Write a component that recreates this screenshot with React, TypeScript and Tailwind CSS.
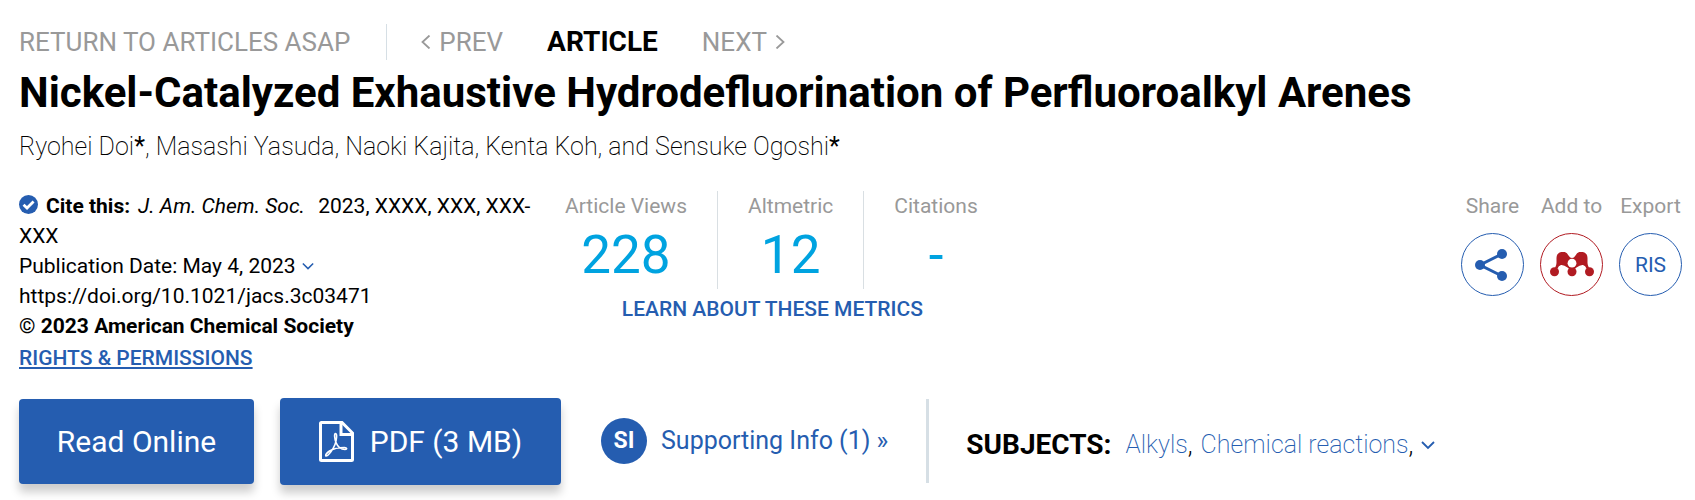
import type { ReactNode } from "react";

const METRICS = [
  { label: "Article Views", value: "228" },
  { label: "Altmetric", value: "12" },
  { label: "Citations", value: "-" },
];

function Chevron({ className, d }: { className: string; d: string }) {
  return (
    <svg
      viewBox="0 0 14 14"
      className={className}
      fill="none"
      stroke="currentColor"
      strokeWidth="1.8"
      aria-hidden
    >
      <path d={d} />
    </svg>
  );
}

const LEFT = "M10.5 0.5 3.500 7l7 6.500";
const RIGHT = "M3.500 0.500 10.500 7l-7 6.500";
const DOWN = "M1 4l6 6 6-6";

function CheckIcon() {
  return (
    <svg viewBox="0 0 18 18" className="mr-2 inline-block size-[19px] align-[-1px]" aria-hidden>
      <circle cx="9" cy="9" r="9" fill="#255db0" />
      <path d="M4.300 9.200l3.300 3.200 6.200-6.200" fill="none" stroke="#fff" strokeWidth="2.600" />
    </svg>
  );
}

function PdfIcon() {
  return (
    <svg viewBox="0 0 35 41" className="h-[41px] w-[35px]" fill="none" stroke="currentColor" aria-hidden>
      <path d="M1.500 2.500q0-1 1-1H23l10.500 10.500V38.500q0 1-1 1h-30q-1 0-1-1z" strokeWidth="3" />
      <path d="M22 1.500V13.500h11.500" strokeWidth="3" />
      <path
        d="M16.500 12.500c-1.500 0-1 5 .5 9 2 5 6 7 9 7 2.500 0 2-2-.5-2-5 0-11 1-15 3.500-3 2-4.500 4.500-3.500 5 2.500 0 7-6.500 9-11.500 1.500-4 2.500-11 .5-11z"
        strokeWidth="1.600"
      />
    </svg>
  );
}

function ShareIcon() {
  return (
    <svg viewBox="0 0 36 32" className="h-8 w-9" fill="currentColor" aria-hidden>
      <path d="M27 5 5 16l22 11" fill="none" stroke="currentColor" strokeWidth="3" />
      <circle cx="27" cy="5" r="5" />
      <circle cx="5" cy="16" r="5" />
      <circle cx="27" cy="27" r="5" />
    </svg>
  );
}

function MendeleyIcon() {
  return (
    <svg viewBox="0 0 44 25" className="h-[25px] w-11" fill="currentColor" aria-hidden>
      <path d="M6.500 6.500A6.300 6.300 0 0 1 18.500 3.500Q20 6 22 6t3.500-2.500A6.300 6.300 0 0 1 37.500 6.500V11q0 2 1.500 5l-2.500.5q-1-3-3.500-3.500-3-.3-6.500 2.500-1.500 1-2.500 2h-4q-1-1-2.500-2Q14 12.700 11 13q-2.500.5-3.500 3.500L5 16q1.500-3 1.500-5z" />
      <circle cx="4.500" cy="19.800" r="4.500" />
      <circle cx="22" cy="19.800" r="4.500" />
      <circle cx="39.500" cy="19.800" r="4.500" />
      <circle cx="22" cy="11.200" r="4.400" fill="#fff" />
    </svg>
  );
}

function Tool({ label, color, children }: { label: string; color: string; children: ReactNode }) {
  return (
    <div className="flex w-[63px] flex-col items-center gap-3">
      <span className="whitespace-nowrap text-[#999]">{label}</span>
      <button
        type="button"
        aria-label={label}
        className={`flex size-[63px] items-center justify-center rounded-full border ${color}`}
      >
        {children}
      </button>
    </div>
  );
}

export default function App() {
  return (
    <main className="bg-white pt-6 pr-[13px] pb-4 pl-[19px] font-['Roboto',sans-serif] text-[21px] leading-[30px] text-black">
      <nav className="flex h-9 items-center text-[26px] text-[#999]">
        <a href="#asap">RETURN TO ARTICLES ASAP</a>
        <span className="mr-8 ml-9 h-full w-px bg-[#d6dfe5]" />
        <a href="#prev" className="flex items-center gap-1.5">
          <Chevron className="size-3.5" d={LEFT} />
          PREV
        </a>
        <span className="mx-11 text-[28px] font-bold text-black">ARTICLE</span>
        <a href="#next" className="flex items-center gap-1.5">
          NEXT
          <Chevron className="size-3.5" d={RIGHT} />
        </a>
      </nav>

      <h1 className="mt-1.5 text-[42px] leading-[54px] font-bold">
        Nickel-Catalyzed Exhaustive Hydrodefluorination of Perfluoroalkyl Arenes
      </h1>

      <p className="mt-[7px] text-[25px] leading-10 font-extralight">
        Ryohei Doi<span className="font-normal">*</span>, Masashi Yasuda, Naoki Kajita, Kenta Koh,
        and Sensuke Ogoshi<span className="font-normal">*</span>
      </p>

      <div className="mt-6 flex items-start">
        <div className="w-[518px] shrink-0">
          <p>
            <CheckIcon />
            <span className="font-bold">Cite this:</span>
            <cite className="mx-2">J. Am. Chem. Soc.</cite>
            &nbsp;2023, XXXX, XXX, XXX-XXX
          </p>
          <p className="flex items-center gap-1.5">
            Publication Date: May 4, 2023
            <button type="button" aria-label="Show publication history" className="text-[#255db0]">
              <Chevron className="size-3" d={DOWN} />
            </button>
          </p>
          <p>https://doi.org/10.1021/jacs.3c03471</p>
          <p className="font-bold">© 2023 American Chemical Society</p>
          <a
            href="#rights"
            className="mt-0.5 inline-block font-medium text-[#255db0] underline decoration-2 underline-offset-2"
          >
            RIGHTS &amp; PERMISSIONS
          </a>
        </div>

        <div>
          <dl className="flex h-[98px]">
            {METRICS.map((m) => (
              <div
                key={m.label}
                className="flex flex-col items-center gap-1 border-l border-[#d9dfe3] px-[30px] first:border-l-0 first:pl-7"
              >
                <dt className="text-[#999]">{m.label}</dt>
                <dd className="text-[53px] leading-[60px] text-[#00a3e0]">{m.value}</dd>
              </div>
            ))}
          </dl>
          <a href="#metrics" className="mt-[5px] block text-center font-medium text-[#255db0]">
            LEARN ABOUT THESE METRICS
          </a>
        </div>

        <div className="ml-auto flex gap-4">
          <Tool label="Share" color="border-[#255db0] text-[#255db0]">
            <ShareIcon />
          </Tool>
          <Tool label="Add to" color="border-[#b11b22] text-[#b11b22]">
            <MendeleyIcon />
          </Tool>
          <Tool label="Export" color="border-[#255db0] text-[#255db0]">
            RIS
          </Tool>
        </div>
      </div>

      <div className="mt-[25px] flex items-center">
        <button
          type="button"
          className="h-[85px] w-[235px] rounded bg-[#255db0] text-[30px] text-white shadow-[0_8px_10px_rgba(0,0,0,0.2)]"
        >
          Read Online
        </button>
        <button
          type="button"
          className="ml-[26px] flex h-[87px] w-[281px] items-center justify-center gap-4 rounded bg-[#255db0] text-[30px] text-white shadow-[0_8px_10px_rgba(0,0,0,0.2)]"
        >
          <PdfIcon />
          PDF (3 MB)
        </button>
        <a href="#si" className="ml-10 flex items-center gap-3.5 pb-0.5 text-[25px] text-[#255db0]">
          <span className="flex size-[46px] items-center justify-center rounded-full bg-[#255db0] text-[23px] font-bold text-white">
            SI
          </span>
          Supporting Info (1) »
        </a>
        <span className="mb-0.5 ml-[38px] h-[84px] w-[3px] bg-[#d6dfe5]" />
        <div className="ml-[37px] flex items-center pt-1.5 text-[25px] font-extralight">
          <span className="mr-3.5 text-[28px] font-bold">SUBJECTS:</span>
          <a href="#alkyls" className="text-[#255db0]">
            Alkyls
          </a>
          <span className="mr-2 font-light">,</span>
          <a href="#reactions" className="text-[#255db0]">
            Chemical reactions
          </a>
          <span className="font-light">,</span>
          <button type="button" aria-label="More subjects" className="ml-2 text-[#255db0]">
            <Chevron className="size-3.5" d={DOWN} />
          </button>
        </div>
      </div>
    </main>
  );
}
